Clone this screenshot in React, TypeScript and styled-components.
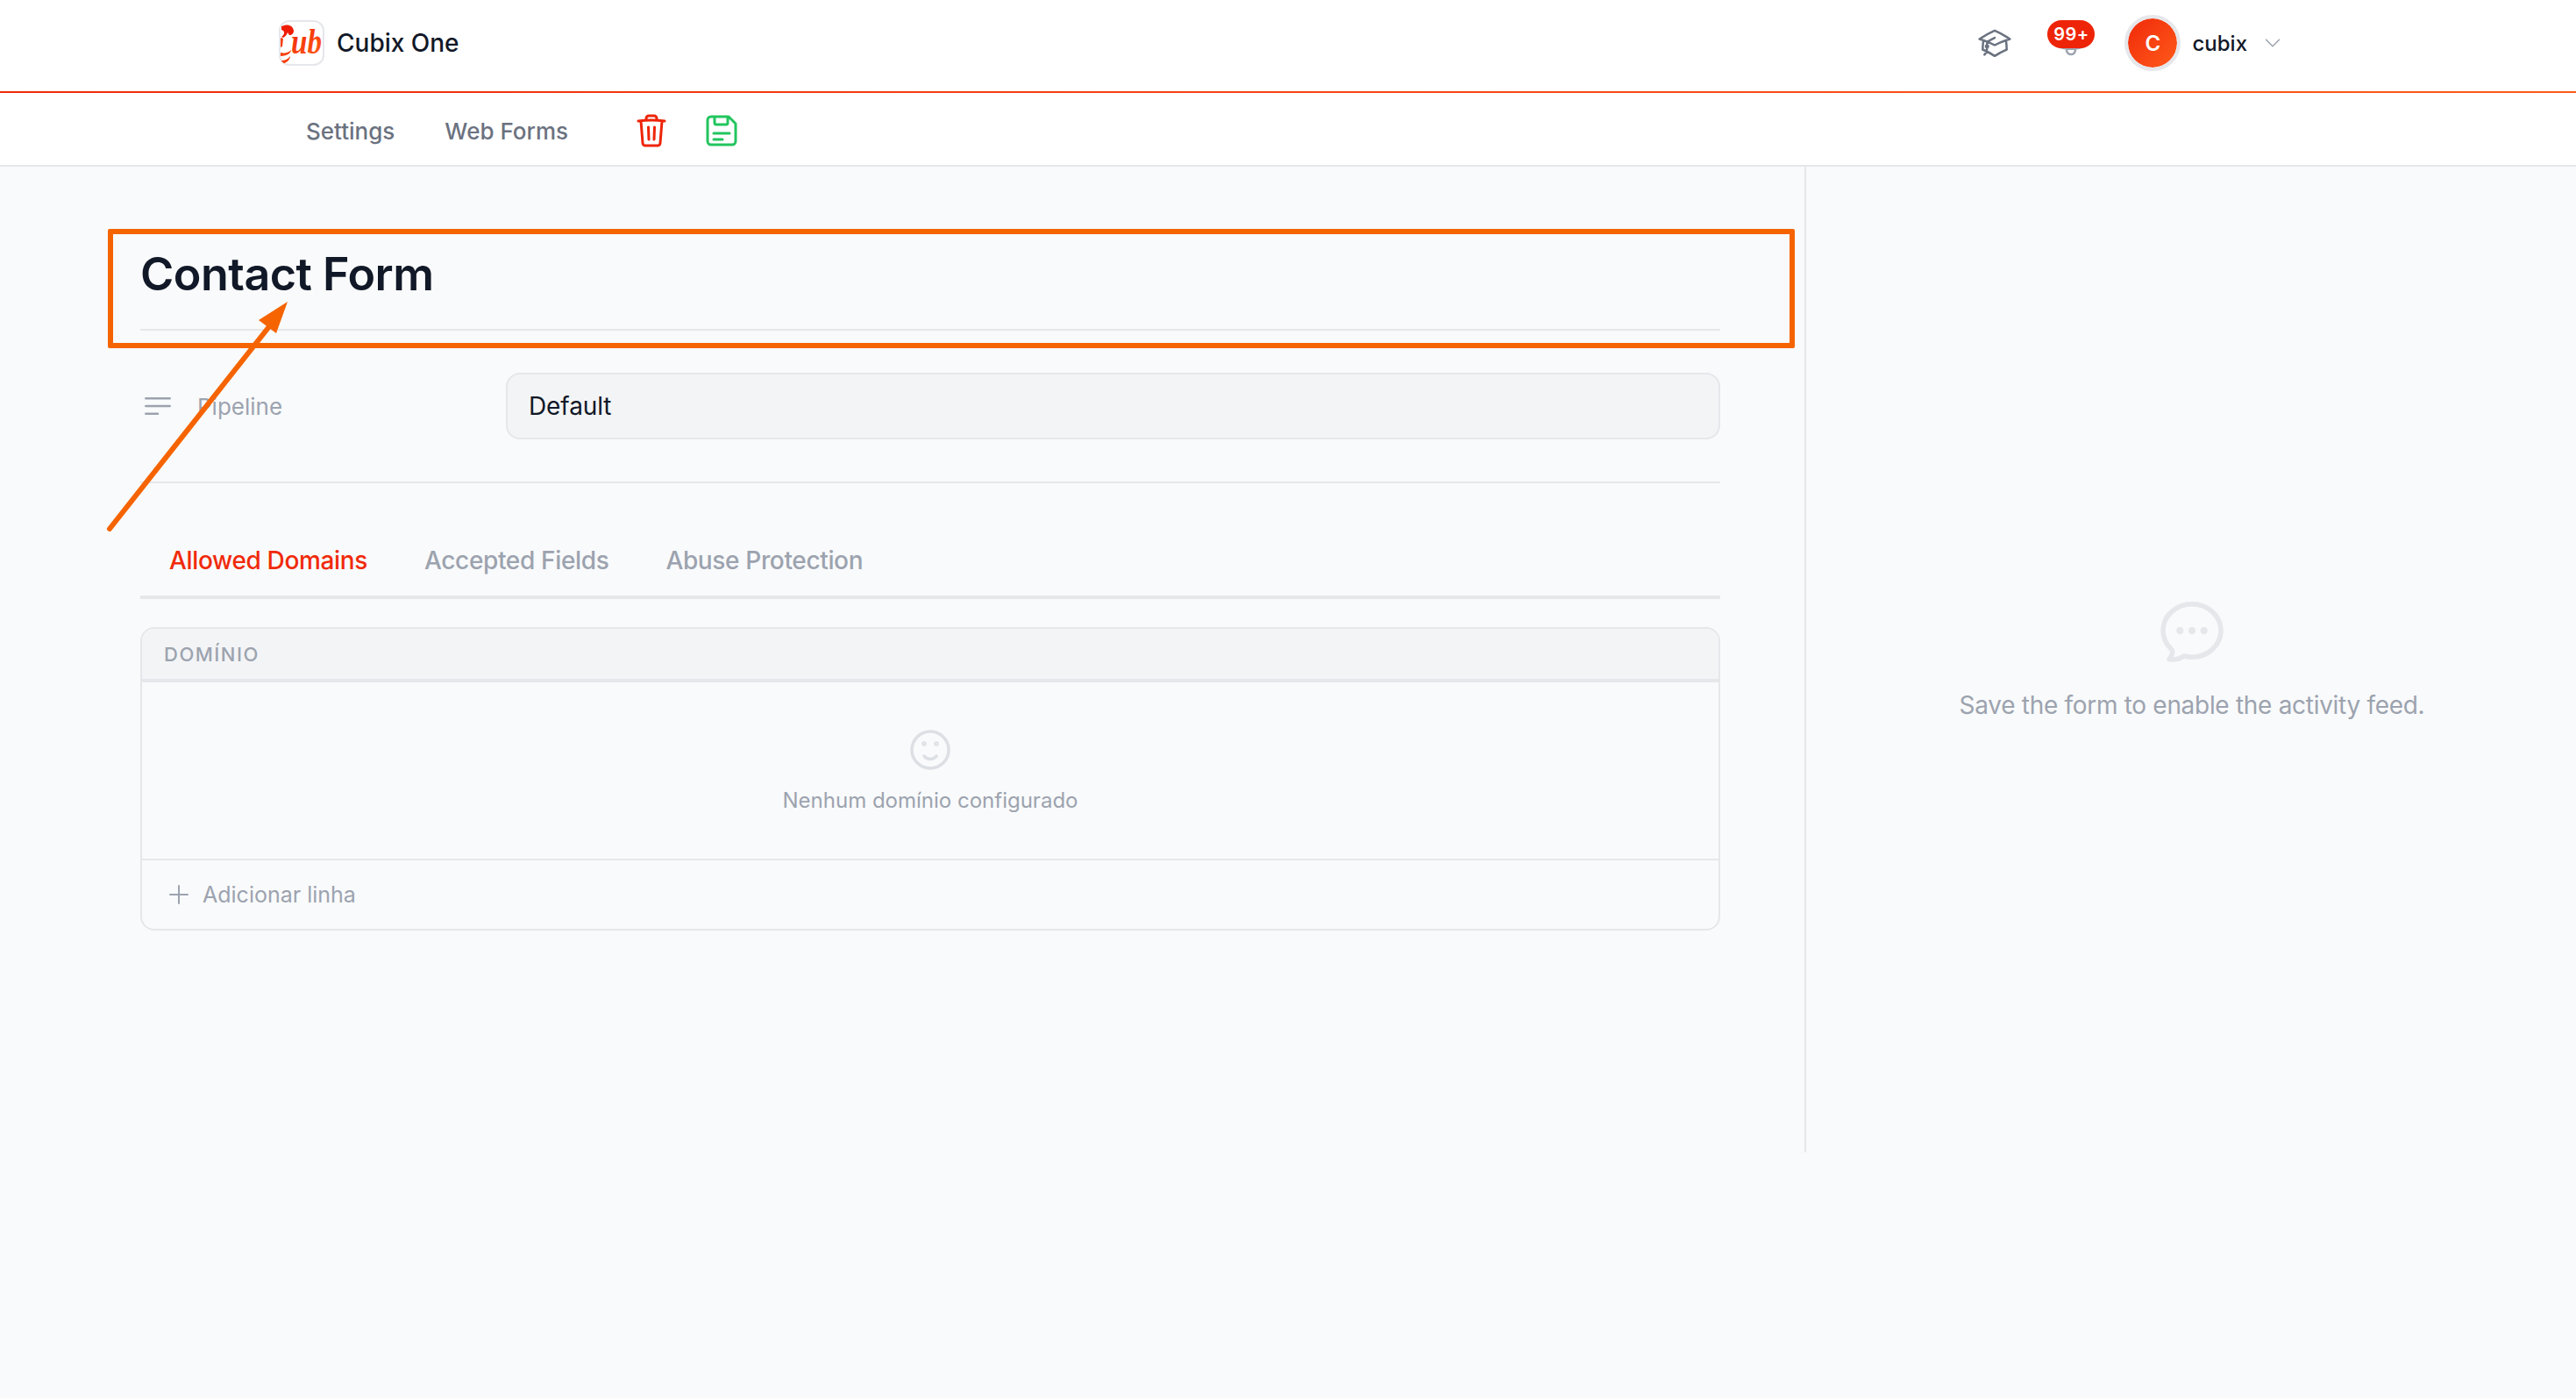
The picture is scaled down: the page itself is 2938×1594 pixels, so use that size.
import styled, { createGlobalStyle } from "styled-components";
import {
    HiOutlineAcademicCap,
    HiOutlineBars3BottomLeft,
    HiOutlineBell,
    HiOutlineChatBubbleOvalLeftEllipsis,
    HiOutlineChevronDown,
    HiOutlinePlus,
} from "react-icons/hi2";

const tabs = ["Allowed Domains", "Accepted Fields", "Abuse Protection"];

export default function App() {
    return (
        <Page>
            <GlobalStyle />
            <Header>
                <Brand>
                    <Logo viewBox="0 0 52 52">
                        <defs>
                            <linearGradient id="logoFill" x1="0" y1="0" x2="0.6" y2="1">
                                <stop offset="0" stopColor="#ee1c04" />
                                <stop offset="1" stopColor="#ff5a14" />
                            </linearGradient>
                            <clipPath id="logoClip">
                                <rect x="1" y="1" width="50" height="50" rx="11" />
                            </clipPath>
                        </defs>
                        <rect x="1" y="1" width="50" height="50" rx="11" fill="#fff" stroke="#e5e7eb" strokeWidth="2" />
                        <g clipPath="url(#logoClip)">
                            <path d="M3 7c6-3 13-2 14 5 0 3-2 5-5 5l-2-3c-1 3-3 5-5 6l-2-1c3-2 4-5 2-7l-2-1z" fill="#ee1c04" />
                            <path d="M2 20l3 1-1 9-2 1zM2 37c5 1 9 0 12-3 0 3-4 7-12 7zM3 46c4 0 8-2 10-5 0 4-4 8-10 9z" fill="#f8400e" />
                            <LogoText x="14" y="38" fill="url(#logoFill)" textLength="35" lengthAdjust="spacingAndGlyphs" transform="matrix(1 0 0 1.15 0 -5.7)">ub</LogoText>
                        </g>
                    </Logo>
                    <BrandName>Cubix One</BrandName>
                </Brand>
                <HeaderActions>
                    <HatIcon />
                    <BellWrap>
                        <BellIcon />
                        <Badge>99+</Badge>
                    </BellWrap>
                    <Avatar>C</Avatar>
                    <UserName>cubix</UserName>
                    <Chevron />
                </HeaderActions>
            </Header>
            <SubNav>
                <NavLink>Settings</NavLink>
                <NavLink>Web Forms</NavLink>
                <NavIcons>
                    <IconSvg width="34" height="38" viewBox="0 0 34 38" stroke="#ee2408">
                        <path d="M2 8c10-1.200 20-1.200 30 0M11 7V5a3 3 0 0 1 3-3h6a3 3 0 0 1 3 3v2M5 8l2 25a3 3 0 0 0 3 3h14a3 3 0 0 0 3-3l2-25M13.500 15l.5 14M20.500 15l-.5 14" />
                    </IconSvg>
                    <IconSvg width="36" height="36" viewBox="0 0 36 36" stroke="#22c55e">
                        <path d="M6 2h20l8 8v20a4 4 0 0 1-4 4H6a4 4 0 0 1-4-4V6a4 4 0 0 1 4-4zM10 2v7a2 2 0 0 0 2 2h11a2 2 0 0 0 2-2V2M9 21h18M9 28h10" />
                    </IconSvg>
                </NavIcons>
            </SubNav>
            <Body>
                <Main>
                    <Title>Contact Form</Title>
                    <FieldRow>
                        <FieldLabel>
                            <LabelIcon />
                            Pipeline
                        </FieldLabel>
                        <FieldValue>Default</FieldValue>
                    </FieldRow>
                    <TabBar>
                        {tabs.map((tab, i) => (
                            <Tab key={tab} $active={i === 0}>{tab}</Tab>
                        ))}
                    </TabBar>
                    <Card>
                        <CardHead>Domínio</CardHead>
                        <EmptyState>
                            <SmileIcon viewBox="0 0 46 46">
                                <circle cx="23" cy="23" r="21" />
                                <path d="M16 30c3 4.500 11 4.500 14 0" />
                                <circle cx="16" cy="16" r="1" />
                                <circle cx="30" cy="16" r="1" />
                            </SmileIcon>
                            <EmptyText>Nenhum domínio configurado</EmptyText>
                        </EmptyState>
                        <AddRow>
                            <HiOutlinePlus size={32} />
                            Adicionar linha
                        </AddRow>
                    </Card>
                </Main>
                <Activity>
                    <ChatIcon />
                    <ActivityText>Save the form to enable the activity feed.</ActivityText>
                </Activity>
            </Body>
            <HighlightBox />
            <Arrow viewBox="0 0 2938 1594">
                <line x1="125" y1="603" x2="312" y2="366" stroke="#f56400" strokeWidth="6" strokeLinecap="round" />
                <polygon points="328,344 315,380 295,365" fill="#f56400" />
            </Arrow>
        </Page>
    );
}

const GlobalStyle = createGlobalStyle`
    html, body {
        margin: 0;
        background: #f9fafb;
        font-family: Inter, "Liberation Sans", sans-serif;
    }
`;

const Page = styled.div`
    position: relative;
    width: 2938px;
    height: 1594px;
    overflow: hidden;
    background: #f9fafb;
`;

const Header = styled.header`
    box-sizing: border-box;
    height: 106px;
    padding: 0 334px 6px 318px;
    display: flex;
    align-items: center;
    justify-content: space-between;
    background: #fff;
    border-bottom: 2px solid;
    border-image: linear-gradient(90deg, #f02a0a, #ff5a1a) 1;
`;

const Brand = styled.div`
    display: flex;
    align-items: center;
    gap: 14px;
`;

const Logo = styled.svg`
    width: 52px;
    height: 52px;
`;

const LogoText = styled.text`
    font-family: "Liberation Serif", serif;
    font-style: italic;
    font-weight: 700;
    font-size: 34px;
`;

const BrandName = styled.span`
    font-size: 28px;
    font-weight: 500;
    color: #111827;
`;

const HeaderActions = styled.div`
    display: flex;
    align-items: center;
`;

const HatIcon = styled(HiOutlineAcademicCap)`
    width: 40px;
    height: 40px;
    color: #6b7280;
    margin-right: 47px;
`;

const BellWrap = styled.div`
    position: relative;
    width: 40px;
    height: 40px;
    margin: 0 41px 4px 0;
`;

const BellIcon = styled(HiOutlineBell)`
    width: 40px;
    height: 40px;
    color: #9ca3af;
    display: block;
`;

const Badge = styled.span`
    position: absolute;
    top: -4px;
    left: -7px;
    width: 54px;
    height: 32px;
    border-radius: 16px;
    background: #ee2408;
    color: #fff;
    font-size: 20px;
    font-weight: 600;
    letter-spacing: 0.5px;
    line-height: 32px;
    text-align: center;
`;

const Avatar = styled.div`
    width: 56px;
    height: 56px;
    border-radius: 50%;
    border: 4px solid #e5e7eb;
    margin-right: 13px;
    display: flex;
    align-items: center;
    justify-content: center;
    background: linear-gradient(135deg, #f02a0a, #ff5a1a);
    background-clip: padding-box;
    color: #fff;
    font-size: 24px;
    font-weight: 600;
`;

const UserName = styled.span`
    font-size: 24px;
    font-weight: 500;
    color: #111827;
    margin-right: 17px;
`;

const Chevron = styled(HiOutlineChevronDown)`
    width: 24px;
    height: 24px;
    color: #9ca3af;
`;

const SubNav = styled.nav`
    box-sizing: border-box;
    height: 84px;
    padding: 4px 0 0 349px;
    display: flex;
    align-items: center;
    gap: 57px;
    background: #fff;
    border-bottom: 2px solid #e5e7eb;
`;

const NavLink = styled.a`
    font-size: 26px;
    font-weight: 500;
    color: #6b7280;
`;

const NavIcons = styled.div`
    display: flex;
    align-items: center;
    gap: 45px;
    margin-left: 21px;
`;

const IconSvg = styled.svg`
    fill: none;
    stroke-width: 3;
    stroke-linecap: round;
    stroke-linejoin: round;
`;

const Body = styled.div`
    display: flex;
    align-items: stretch;
    height: 1124px;
`;

const Main = styled.main`
    box-sizing: border-box;
    width: 2060px;
    padding: 0 96px 0 160px;
    border-right: 2px solid #e5e7eb;
`;

const Title = styled.h1`
    margin: 0;
    height: 187px;
    box-sizing: border-box;
    padding-top: 88px;
    font-size: 52px;
    line-height: 70px;
    font-weight: 600;
    letter-spacing: -0.5px;
    color: #111827;
    border-bottom: 2px solid #e5e7eb;
`;

const FieldRow = styled.div`
    box-sizing: border-box;
    height: 174px;
    padding-top: 48px;
    display: flex;
    align-items: flex-start;
    border-bottom: 2px solid #e5e7eb;
`;

const FieldLabel = styled.div`
    width: 417px;
    height: 76px;
    display: flex;
    align-items: center;
    gap: 25px;
    font-size: 26px;
    color: #9ca3af;
`;

const LabelIcon = styled(HiOutlineBars3BottomLeft)`
    width: 40px;
    height: 40px;
    color: #9ca3af;
`;

const FieldValue = styled.div`
    box-sizing: border-box;
    flex: 1;
    height: 76px;
    padding: 0 24px;
    display: flex;
    align-items: center;
    background: #f3f4f6;
    border: 2px solid #e5e7eb;
    border-radius: 16px;
    font-size: 28px;
    letter-spacing: -0.1px;
    color: #111827;
`;

const TabBar = styled.div`
    box-sizing: border-box;
    height: 132px;
    padding: 58px 0 0 0.5px;
    display: flex;
    border-bottom: 4px solid #e5e7eb;
`;

const Tab = styled.div<{ $active?: boolean }>`
    padding: 0 32.5px;
    font-size: 28px;
    line-height: 60px;
    font-weight: 500;
    letter-spacing: -0.35px;
    color: ${(p) => (p.$active ? "#f02a0a" : "#9ca3af")};
`;

const Card = styled.section`
    box-sizing: border-box;
    margin-top: 32px;
    height: 346px;
    border: 2px solid #e5e7eb;
    border-radius: 16px;
    overflow: hidden;
    display: flex;
    flex-direction: column;
`;

const CardHead = styled.div`
    box-sizing: border-box;
    height: 61px;
    padding-left: 25px;
    display: flex;
    align-items: center;
    background: #f3f4f6;
    border-bottom: 4px solid #e5e7eb;
    font-size: 22px;
    font-weight: 500;
    letter-spacing: 1.5px;
    text-transform: uppercase;
    color: #9ca3af;
`;

const EmptyState = styled.div`
    box-sizing: border-box;
    height: 203px;
    padding-top: 54px;
    display: flex;
    flex-direction: column;
    align-items: center;
    gap: 20px;
    border-bottom: 2px solid #e5e7eb;
`;

const SmileIcon = styled.svg`
    width: 46px;
    height: 46px;
    fill: none;
    stroke: #dcdfe4;
    stroke-width: 3.5;
    stroke-linecap: round;
`;

const EmptyText = styled.span`
    font-size: 24px;
    color: #9ca3af;
`;

const AddRow = styled.div`
    flex: 1;
    padding-left: 26px;
    display: flex;
    align-items: center;
    gap: 11px;
    font-size: 25px;
    color: #9ca3af;
`;

const Activity = styled.aside`
    flex: 1;
    display: flex;
    flex-direction: column;
    align-items: center;
    padding: 485px 0 0 2px;
    gap: 24px;
`;

const ChatIcon = styled(HiOutlineChatBubbleOvalLeftEllipsis)`
    width: 88px;
    height: 88px;
    color: #e5e7eb;
`;

const ActivityText = styled.p`
    margin: 0;
    font-size: 28px;
    letter-spacing: -0.3px;
    color: #9ca3af;
`;

const HighlightBox = styled.div`
    position: absolute;
    left: 123px;
    top: 261px;
    width: 1924px;
    height: 136px;
    box-sizing: border-box;
    border: 6px solid #f56400;
    border-radius: 2px;
`;

const Arrow = styled.svg`
    position: absolute;
    inset: 0;
    width: 2938px;
    height: 1594px;
    pointer-events: none;
`;
